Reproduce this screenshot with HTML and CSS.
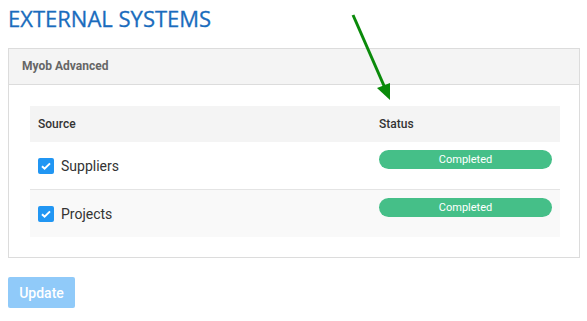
FILE: index.html
```html
<!DOCTYPE html>
<html lang="en">
<head>
    <meta charset="UTF-8">
    <title>External Systems</title>
    <link rel="stylesheet" href="styles.css">
</head>
<body>
    <h1 class="page-title">EXTERNAL SYSTEMS</h1>

    <div class="panel">
        <div class="panel-heading">Myob Advanced</div>
        <div class="panel-body">
            <table class="sources">
                <thead>
                    <tr>
                        <th class="col-source">Source</th>
                        <th>Status</th>
                    </tr>
                </thead>
                <tbody>
                    <tr>
                        <td>
                            <label class="check">
                                <input type="checkbox" checked>
                                <span class="box"><svg viewBox="0 0 16 16" width="16" height="16"><path d="M4 8.2l2.6 2.5L12 5.4" fill="none" stroke="#fff" stroke-width="2"/></svg></span>
                                Suppliers
                            </label>
                        </td>
                        <td class="status"><span class="badge">Completed</span></td>
                    </tr>
                    <tr class="odd">
                        <td>
                            <label class="check">
                                <input type="checkbox" checked>
                                <span class="box"><svg viewBox="0 0 16 16" width="16" height="16"><path d="M4 8.2l2.6 2.5L12 5.4" fill="none" stroke="#fff" stroke-width="2"/></svg></span>
                                Projects
                            </label>
                        </td>
                        <td class="status"><span class="badge">Completed</span></td>
                    </tr>
                </tbody>
            </table>
        </div>
    </div>

    <button class="btn-update" disabled>Update</button>

    <svg class="arrow" width="60" height="110" viewBox="0 0 60 110">
        <line x1="8" y1="15" x2="40" y2="88" stroke="#0a8a0a" stroke-width="3"/>
        <polygon points="45,100 32,88 45,83" fill="#0a8a0a"/>
    </svg>
</body>
</html>
```

FILE: styles.css
```css
body {
    margin: 0;
    padding: 0 7px 0 8px;
    font-family: Roboto, "Liberation Sans", sans-serif;
    color: #333;
    background: #fff;
    position: relative;
}

.page-title {
    margin: 0;
    padding-top: 4px;
    height: 44px;
    font-family: "Open Sans", sans-serif;
    font-weight: 400;
    font-size: 22px;
    line-height: 28px;
    color: #1a6cbd;
    -webkit-text-stroke: 0.3px #1a6cbd;
}

.panel {
    border: 1px solid #dcdcdc;
    width: 570px;
}

.panel-heading {
    background: #f4f4f4;
    border-bottom: 1px solid #dcdcdc;
    height: 35px;
    line-height: 35px;
    padding-left: 13px;
    font-size: 12px;
    font-weight: 700;
    color: #666;
}

.panel-body {
    padding: 21px 20px 20px 21px;
}

.sources {
    width: 530px;
    border-collapse: collapse;
}

.sources th {
    background: #f4f4f4;
    height: 36px;
    text-align: left;
    font-size: 12px;
    font-weight: 500;
    color: #333;
    padding: 0 8px;
}

.col-source {
    width: 325px;
}

.sources td {
    height: 47px;
    padding: 0 8px;
    vertical-align: middle;
}

.sources td.status {
    vertical-align: top;
    padding-top: 8px;
    height: 39px;
}

.sources tbody tr:first-child td {
    border-bottom: 1px solid #e4e4e4;
}

.sources tr.odd td {
    background: #f9f9f9;
}

.check {
    display: flex;
    align-items: center;
    gap: 7px;
    font-size: 14px;
    color: #333;
}

.check input {
    display: none;
}

.box {
    width: 16px;
    height: 16px;
    border-radius: 2px;
    background: #2196f3;
    display: flex;
}

.badge {
    display: block;
    height: 19px;
    line-height: 19px;
    border-radius: 10px;
    background: #45bf88;
    color: #fff;
    font-size: 11px;
    text-align: center;
}

.btn-update {
    margin-top: 19px;
    width: 67px;
    height: 31px;
    border: none;
    border-radius: 2px;
    background: #90caf9;
    color: #fff;
    font-family: Roboto, sans-serif;
    font-size: 14px;
    font-weight: 500;
    padding: 0;
}

.arrow {
    position: absolute;
    left: 345px;
    top: 0;
}
```
